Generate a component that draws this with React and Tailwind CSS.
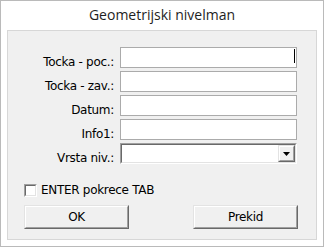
import React from "react";

const labelFont = { fontFamily: '"DejaVu Sans", "Liberation Sans", sans-serif' };

function Field({ label, cursor }) {
  return (
    <div className="flex h-[21px]">
      <div className="w-[106px] pt-[9px] text-right text-[12px] leading-[13px] tracking-[-0.3px] text-black whitespace-nowrap">
        {label}
      </div>
      <div className="relative ml-[6px] h-[21px] w-[177px] border border-[#ababab] bg-white">
        {cursor && <span className="absolute right-[1px] top-[1px] h-[14px] w-px bg-black" />}
      </div>
    </div>
  );
}

function Combo({ label }) {
  return (
    <div className="flex h-[21px]">
      <div className="w-[106px] pt-[9px] text-right text-[12px] leading-[13px] tracking-[-0.3px] text-black whitespace-nowrap">
        {label}
      </div>
      <div className="ml-[6px] h-[21px] w-[177px] border border-t-[#a0a0a0] border-l-[#a0a0a0] border-r-white border-b-white">
        <div className="flex h-full w-full justify-end border border-t-[#696969] border-l-[#696969] border-r-[#e3e3e3] border-b-[#e3e3e3] bg-white">
          <div className="h-[17px] w-[17px] border border-t-[#e3e3e3] border-l-[#e3e3e3] border-r-[#696969] border-b-[#696969]">
            <div className="flex h-full w-full items-center justify-center border border-t-white border-l-white border-r-[#a0a0a0] border-b-[#a0a0a0] bg-[#f0f0f0]">
              <svg width="7" height="4" viewBox="0 0 7 4" className="mt-[1px]">
                <polygon points="0,0 7,0 3.5,4" fill="#000" />
              </svg>
            </div>
          </div>
        </div>
      </div>
    </div>
  );
}

function Button({ children }) {
  return (
    <div className="h-[24px] w-[105px] border border-t-[#e3e3e3] border-l-[#e3e3e3] border-r-[#696969] border-b-[#696969]">
      <div className="flex h-full w-full items-center justify-center border border-t-white border-l-white border-r-[#a0a0a0] border-b-[#a0a0a0] bg-[#f0f0f0] text-[12px] tracking-[-0.3px] text-black">
        {children}
      </div>
    </div>
  );
}

export default function App() {
  return (
    <div className="flex h-[247px] w-[324px] flex-col border border-[#bababa] bg-white" style={labelFont}>
      <div
        className="h-[29px] pt-[4px] text-center text-[14px] leading-[20px] text-[#1e1e1e]"
        style={{ fontFamily: '"Open Sans", "Noto Sans", sans-serif' }}
      >
        Geometrijski nivelman
      </div>
      <div className="mx-[6px] flex h-[210px] flex-col border border-[#d7d7d7] bg-[#f0f0f0] pt-[16px]">
        <div className="flex flex-col gap-[3px]">
          <Field label="Tocka - poc.:" cursor />
          <Field label="Tocka - zav.:" />
          <Field label="Datum:" />
          <Field label="Info1:" />
          <Combo label="Vrsta niv.:" />
        </div>
        <div className="mt-[20px] flex items-center pl-[16px]">
          <div className="h-[13px] w-[13px] border border-t-[#a0a0a0] border-l-[#a0a0a0] border-r-white border-b-white">
            <div className="h-full w-full border border-t-[#696969] border-l-[#696969] border-r-[#e3e3e3] border-b-[#e3e3e3] bg-white" />
          </div>
          <span className="ml-[4px] text-[12px] leading-[13px] tracking-[-0.3px] text-black whitespace-nowrap">
            ENTER pokrece TAB
          </span>
        </div>
        <div className="mt-[8px] flex justify-between pl-[16px] pr-[18px]">
          <Button>OK</Button>
          <Button>Prekid</Button>
        </div>
      </div>
    </div>
  );
}
